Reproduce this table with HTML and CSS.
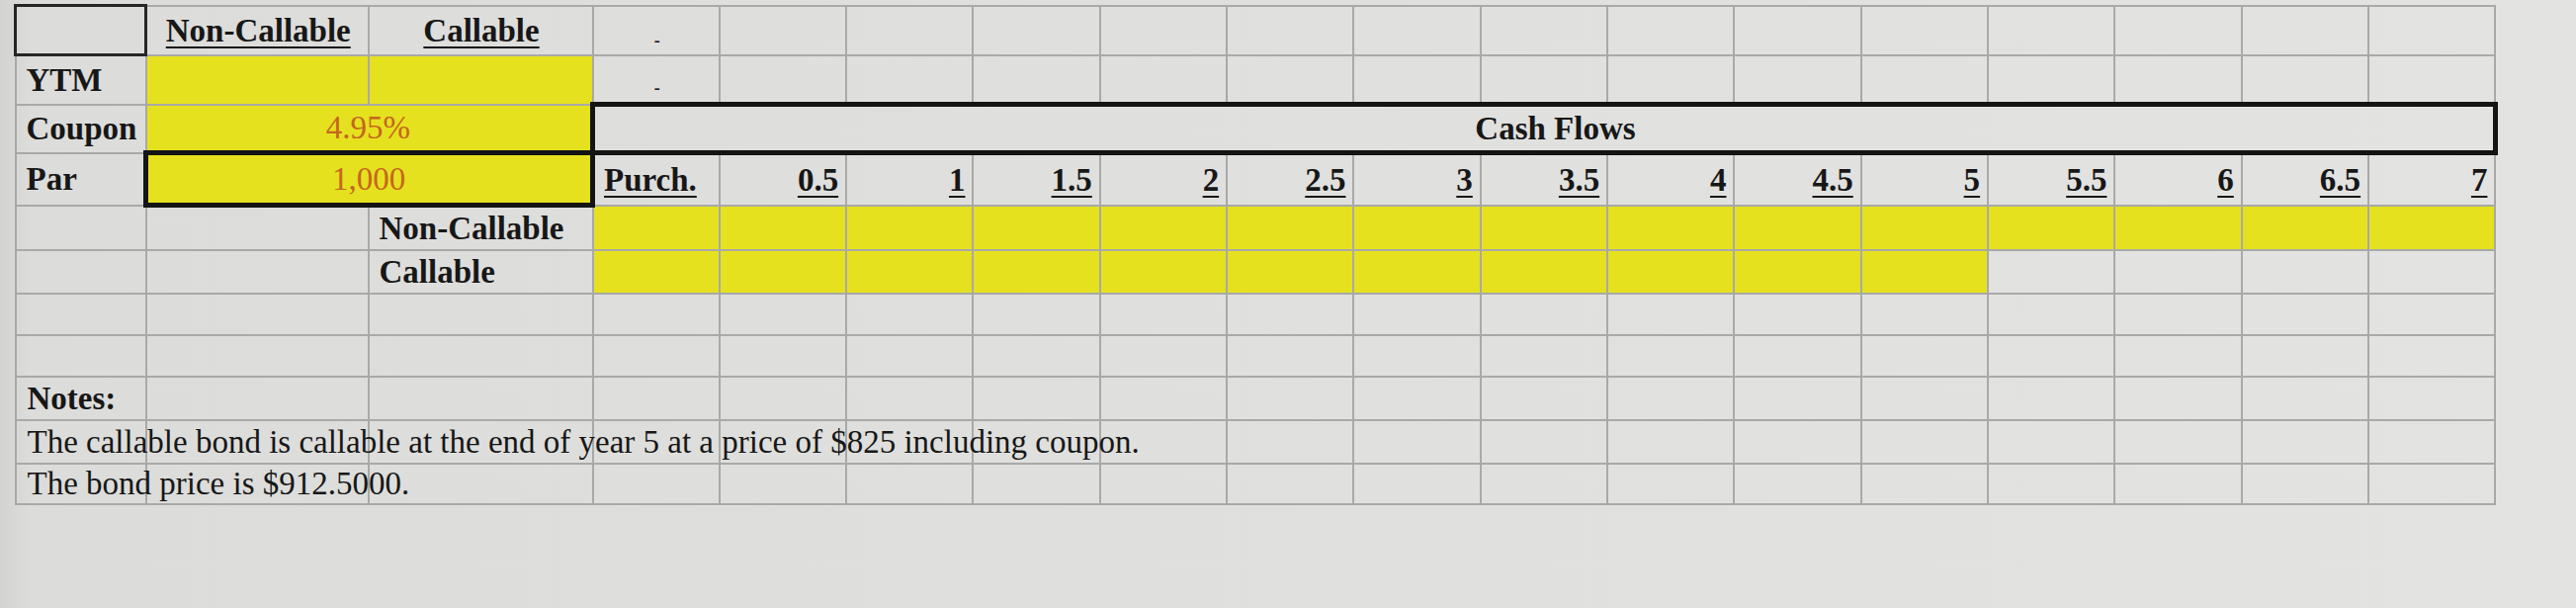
FILE: index.html
```html
<!DOCTYPE html>
<html>
<head>
<meta charset="utf-8">
<title>Bond cash flows</title>
<link rel="stylesheet" href="styles.css">
</head>
<body>
<div class="page">
<table class="sheet">
  <colgroup>
    <col class="ca"><col class="cb"><col class="cc">
    <col class="cn"><col class="cn"><col class="cn"><col class="cn"><col class="cn">
    <col class="cn"><col class="cn"><col class="cn"><col class="cn"><col class="cn">
    <col class="cn"><col class="cn"><col class="cn"><col class="cn"><col class="cn">
  </colgroup>
  <tr class="r1">
    <td class="box"></td>
    <td class="hdr"><span class="ul">Non-Callable</span></td>
    <td class="hdr"><span class="ul">Callable</span></td>
    <td class="dash">-</td>
    <td></td><td></td><td></td><td></td><td></td><td></td><td></td>
    <td></td><td></td><td></td><td></td><td></td><td></td><td></td>
  </tr>
  <tr class="r2">
    <td class="lbl">YTM</td>
    <td class="y"></td>
    <td class="y"></td>
    <td class="dash">-</td>
    <td></td><td></td><td></td><td></td><td></td><td></td><td></td>
    <td></td><td></td><td></td><td></td><td></td><td></td><td></td>
  </tr>
  <tr class="r3">
    <td class="lbl">Coupon</td>
    <td class="y val" colspan="2">4.95%</td>
    <td class="cf" colspan="15">Cash Flows</td>
  </tr>
  <tr class="r4">
    <td class="lbl">Par</td>
    <td class="y val thick" colspan="2">1,000</td>
    <td class="purch"><span class="ul">Purch.</span></td>
    <td class="num"><span class="ul">0.5</span></td>
    <td class="num"><span class="ul">1</span></td>
    <td class="num"><span class="ul">1.5</span></td>
    <td class="num"><span class="ul">2</span></td>
    <td class="num"><span class="ul">2.5</span></td>
    <td class="num"><span class="ul">3</span></td>
    <td class="num"><span class="ul">3.5</span></td>
    <td class="num"><span class="ul">4</span></td>
    <td class="num"><span class="ul">4.5</span></td>
    <td class="num"><span class="ul">5</span></td>
    <td class="num"><span class="ul">5.5</span></td>
    <td class="num"><span class="ul">6</span></td>
    <td class="num"><span class="ul">6.5</span></td>
    <td class="num"><span class="ul">7</span></td>
  </tr>
  <tr class="r5">
    <td></td><td></td>
    <td class="sub">Non-Callable</td>
    <td class="y"></td><td class="y"></td><td class="y"></td><td class="y"></td><td class="y"></td>
    <td class="y"></td><td class="y"></td><td class="y"></td><td class="y"></td><td class="y"></td>
    <td class="y"></td><td class="y"></td><td class="y"></td><td class="y"></td><td class="y"></td>
  </tr>
  <tr class="r6">
    <td></td><td></td>
    <td class="sub">Callable</td>
    <td class="y"></td><td class="y"></td><td class="y"></td><td class="y"></td><td class="y"></td>
    <td class="y"></td><td class="y"></td><td class="y"></td><td class="y"></td><td class="y"></td>
    <td class="y"></td>
    <td></td><td></td><td></td><td></td>
  </tr>
  <tr class="r7">
    <td></td><td></td><td></td><td></td><td></td><td></td><td></td><td></td><td></td>
    <td></td><td></td><td></td><td></td><td></td><td></td><td></td><td></td><td></td>
  </tr>
  <tr class="r8">
    <td></td><td></td><td></td><td></td><td></td><td></td><td></td><td></td><td></td>
    <td></td><td></td><td></td><td></td><td></td><td></td><td></td><td></td><td></td>
  </tr>
  <tr class="r9">
    <td class="notes">Notes:</td>
    <td></td><td></td><td></td><td></td><td></td><td></td><td></td><td></td>
    <td></td><td></td><td></td><td></td><td></td><td></td><td></td><td></td><td></td>
  </tr>
  <tr class="r10">
    <td class="note">The callable bond is callable at the end of year 5 at a price of $825 including coupon.</td>
    <td></td><td></td><td></td><td></td><td></td><td></td><td></td><td></td>
    <td></td><td></td><td></td><td></td><td></td><td></td><td></td><td></td><td></td>
  </tr>
  <tr class="r11">
    <td class="note">The bond price is $912.5000.</td>
    <td></td><td></td><td></td><td></td><td></td><td></td><td></td><td></td>
    <td></td><td></td><td></td><td></td><td></td><td></td><td></td><td></td><td></td>
  </tr>
</table>
</div>
</body>
</html>
```
FILE: styles.css
```css
html, body {
  margin: 0;
  padding: 0;
}
body {
  width: 2606px;
  height: 615px;
  overflow: hidden;
  background: linear-gradient(90deg, #d3d3d1 0px, #dcdcda 30px, #dfdfdd 40%, #e3e3e1 100%);
  font-family: "Liberation Serif", "Times New Roman", serif;
  color: #171717;
}
.page {
  padding: 4px 0 0 14px;
}
.sheet {
  border-collapse: collapse;
  table-layout: fixed;
  width: 2509px;
}
.ca { width: 132px; }
.cb { width: 225px; }
.cc { width: 227px; }
.cn { width: 128.33px; }

.sheet td {
  border: 2px solid #a9a9a7;
  padding: 0 7px 0 9px;
  vertical-align: middle;
  white-space: nowrap;
  overflow: visible;
  font-size: 33px;
  line-height: 34px;
}
.r1 { height: 50px; }
.r2 { height: 50px; }
.r3 { height: 49px; }
.r4 { height: 53px; }
.r5 { height: 45px; }
.r6 { height: 44px; }
.r7 { height: 42px; }
.r8 { height: 42px; }
.r9 { height: 44px; }
.r10 { height: 44px; }
.r11 { height: 41px; }

.sheet td.box {
  border: 3px solid #262626;
}
.sheet td.hdr {
  text-align: center;
  font-weight: bold;
}
.ul {
  text-decoration: underline;
  text-decoration-thickness: 2px;
  text-underline-offset: 5px;
}
.sheet td.dash {
  text-align: center;
  vertical-align: bottom;
  font-size: 18px;
  line-height: 20px;
  font-weight: bold;
  padding-bottom: 4px;
}
.sheet td.lbl {
  font-weight: bold;
  padding-left: 10px;
}
.sheet td.y {
  background: #e5e11f;
}
.sheet td.val {
  text-align: center;
  color: #c6661d;
  padding-left: 6px;
}
.sheet td.thick {
  border: 5px solid #141414;
}
.sheet td.cf {
  border: 5px solid #141414;
  text-align: center;
  font-weight: bold;
  padding-left: 30px;
}
.sheet td.purch {
  font-weight: bold;
  text-align: left;
}
.sheet td.num {
  font-weight: bold;
  text-align: right;
  padding-right: 7px;
}
.sheet td.sub {
  font-weight: bold;
  padding-left: 10px;
}
.sheet td.notes {
  font-weight: bold;
  padding-left: 11px;
}
.sheet td.note {
  padding-left: 11px;
}
```
